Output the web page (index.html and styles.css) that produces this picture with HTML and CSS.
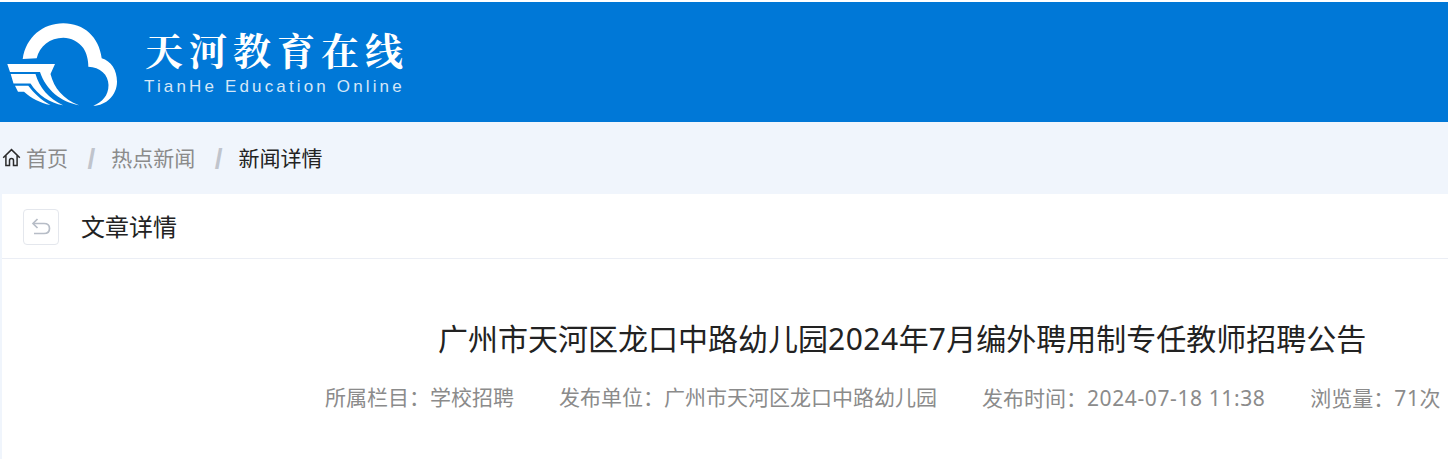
FILE: index.html
```html
<!DOCTYPE html>
<html lang="zh">
<head>
    <meta charset="UTF-8">
    <title>文章详情</title>
    <link rel="stylesheet" href="styles.css">
</head>
<body>
    <header class="site-header">
        <svg class="logo-mark" width="112" height="88" viewBox="0 0 112 88">
            <path fill="#fff" d="M15.7 39 C19 17 36 3.3 56.3 3.3 C77 3.3 92 17 94.7 38.3 C104 41 110 50 110 61.7 C110 75 99 85.7 86.3 85.7 C95 82 101.5 76 101.5 65 C101.5 55 93 46.7 81.3 46.7 C81.5 40 79.5 33 76.3 28 C71.5 21.5 64 17.7 56.3 17.7 C43 17.7 32.5 26 29.7 38.3 Z"/>
            <path fill="#fff" d="M0.3 44 H48 L43.5 54 C47 68 56 79 72 85.2 C54 82 39 70 33 52 H3 Z"/>
            <path fill="#fff" d="M3.7 54 H28.5 C32 67 42 79 56 85.2 C43 83 31 75 23.5 63.4 H6.5 Z"/>
            <path fill="#fff" d="M8 65.7 H21.3 C27 73 34 80 43.5 85 C33 83 24 78 17 71.7 H11 Z"/>
        </svg>
        <div class="logo-text">
            <div class="logo-name">天河教育在线</div>
            <div class="logo-sub">TianHe Education Online</div>
        </div>
    </header>

    <nav class="crumbs">
        <svg class="home-icon" width="19" height="19" viewBox="0 0 19 19" fill="none" stroke="#2b2b2b" stroke-width="1.5">
            <path d="M1.2 9.8 L9.5 1.6 L17.8 9.8"/>
            <path d="M3.9 7.5 V17.5 H7.5 V12.5 A2 2 0 0 1 11.5 12.5 V17.5 H15.1 V7.5"/>
        </svg>
        <a class="crumb">首页</a>
        <span class="sep">/</span>
        <a class="crumb">热点新闻</a>
        <span class="sep">/</span>
        <span class="crumb-now">新闻详情</span>
    </nav>

    <main class="card">
        <div class="card-head">
            <button class="back-btn">
                <svg width="20" height="17" viewBox="0 0 20 17" fill="none" stroke="#b7bdc7" stroke-width="1.7">
                    <path d="M6.5 1 L2 5.5 L6.5 10"/>
                    <path d="M2 5.5 H13 C16.5 5.5 18.5 7.5 18.5 10.5 C18.5 13.5 16.5 15.5 13 15.5 H3"/>
                </svg>
            </button>
            <h2 class="card-title">文章详情</h2>
        </div>
        <article class="article">
            <h1 class="article-title">广州市天河区龙口中路幼儿园<span class="num">2024</span>年<span class="num">7</span>月编外聘用制专任教师招聘公告</h1>
            <div class="meta">
                <span>所属栏目：学校招聘</span>
                <span>发布单位：广州市天河区龙口中路幼儿园</span>
                <span>发布时间：<span class="num">2024-07-18 11:38</span></span>
                <span>浏览量：<span class="num">71</span>次</span>
            </div>
        </article>
    </main>
</body>
</html>
```

FILE: styles.css
```css
* {
    margin: 0;
    padding: 0;
    box-sizing: border-box;
}

html, body {
    width: 100%;
    height: 100%;
    overflow: hidden;
    background: #f0f5fc;
    font-family: "Liberation Sans", "Noto Sans CJK SC", sans-serif;
}

body {
    padding-top: 2px;
    background: linear-gradient(#fff 2px, #f0f5fc 2px);
}

.site-header {
    height: 120px;
    background: #0078d7;
    display: flex;
    align-items: flex-start;
}

.logo-mark {
    margin: 18px 0 0 7px;
}

.logo-text {
    margin: 21px 0 0 25px;
    color: #fff;
}

.logo-name {
    font-family: "Noto Serif CJK SC", "Noto Sans CJK SC", serif;
    font-size: 38px;
    font-weight: 700;
    line-height: 52px;
    letter-spacing: 6px;
    white-space: nowrap;
    margin-left: 1px;
}

.logo-sub {
    font-size: 17px;
    line-height: 24px;
    letter-spacing: 3.15px;
    color: #d5e7f7;
    white-space: nowrap;
}

.crumbs {
    height: 72px;
    display: flex;
    align-items: center;
    padding: 0 0 2px 2px;
    font-size: 21px;
}

.home-icon {
    margin-right: 5px;
}

.crumb {
    color: #8b8b8b;
}

.crumb-now {
    color: #222;
}

.sep {
    color: #c0c4cc;
    font-weight: 700;
    font-size: 28px;
    padding-top: 3px;
    margin: 0 16px 0 19.5px;
}

.card {
    margin-left: 2px;
    background: #fff;
    height: 270px;
}

.card-head {
    height: 65px;
    display: flex;
    align-items: center;
    padding: 1px 0 0 21px;
    border-bottom: 1px solid #ebeef5;
}

.back-btn {
    width: 36px;
    height: 36px;
    border: 1px solid #e4e7ed;
    border-radius: 4px;
    background: #fff;
    display: flex;
    align-items: center;
    justify-content: center;
}

.card-title {
    margin-left: 22px;
    padding-bottom: 3px;
    font-size: 24px;
    font-weight: 400;
    color: #222;
}

.article-title {
    padding: 58px 0 0 436px;
    font-size: 30px;
    line-height: 44px;
    font-weight: 400;
    color: #222;
    white-space: nowrap;
}

.article-title .num {
    font-family: "Noto Sans", sans-serif;
    letter-spacing: 0.5px;
}

.meta {
    margin-top: 21px;
    padding-left: 323px;
    display: flex;
    gap: 45px;
    font-size: 21px;
    line-height: 30px;
    color: #8b8b8b;
    white-space: nowrap;
}

.meta .num {
    font-family: "Noto Sans", sans-serif;
    letter-spacing: 0.6px;
}
```
